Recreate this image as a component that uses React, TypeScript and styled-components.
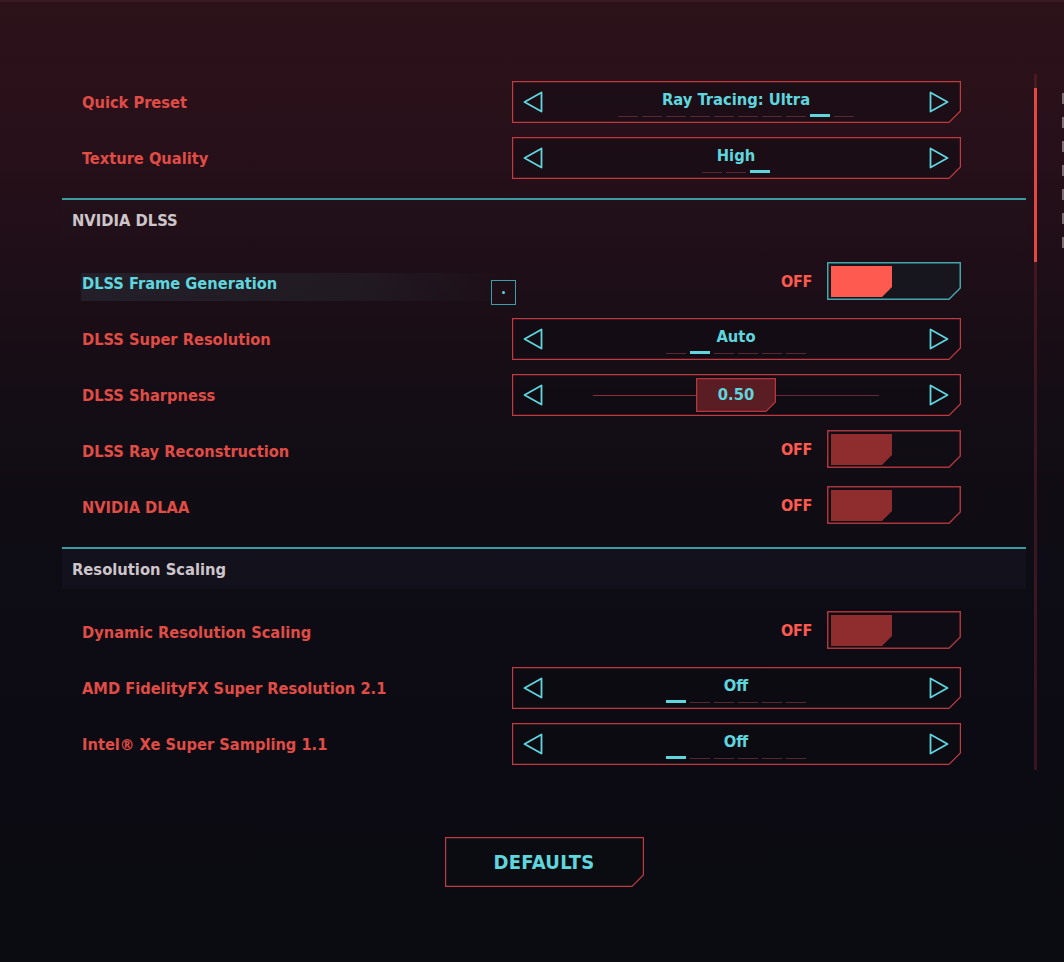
import React from "react";
import styled, { createGlobalStyle } from "styled-components";

const RED = "#e04c46";
const HOT = "#ff5a4f";
const TEAL = "#5fd6de";
const LINE_TEAL = "#3a9ba0";
const FRAME_RED = "#c03a42";

const GlobalStyle = createGlobalStyle`
  body {
    margin: 0;
    background: #0b0b12;
    font-family: "Liberation Sans Narrow", "DejaVu Sans Condensed", sans-serif;
  }
`;

// cut-corner outline used by selectors, toggles and the button
const FrameSvg = styled.svg`
  position: absolute;
  left: 0;
  top: 0;
  pointer-events: none;
  overflow: visible;
`;

type FrameProps = { w: number; h: number; cut: number; stroke: string; fill: string; sw?: number };

const Frame: React.FC<FrameProps> = ({ w, h, cut, stroke, fill, sw = 1.2 }) => {
  const o = sw / 2;
  const pts = `${o},${o} ${w - o},${o} ${w - o},${h - cut} ${w - cut},${h - o} ${o},${h - o}`;
  return (
    <FrameSvg width={w} height={h} viewBox={`0 0 ${w} ${h}`}>
      <polygon points={pts} fill={fill} stroke={stroke} strokeWidth={sw} />
    </FrameSvg>
  );
};

const Arrow: React.FC<{ dir: "left" | "right" }> = ({ dir }) => (
  <ArrowSvg width="20" height="22" viewBox="0 0 20 22">
    {dir === "left" ? (
      <polygon points="18.5,1.5 1.5,11 18.5,20.5" fill="none" stroke={TEAL} strokeWidth="1.8" strokeLinejoin="round" />
    ) : (
      <polygon points="1.5,1.5 18.5,11 1.5,20.5" fill="none" stroke={TEAL} strokeWidth="1.8" strokeLinejoin="round" />
    )}
  </ArrowSvg>
);

const ArrowSvg = styled.svg`
  position: relative;
  flex-shrink: 0;
`;

const Page = styled.div`
  width: 1064px;
  height: 962px;
  overflow: hidden;
  box-sizing: border-box;
  border-top: 2px solid #3a1921;
  padding-top: 72px;
  background: linear-gradient(
    180deg,
    #2c1219 0%,
    #28101a 14%,
    #1e0e17 28%,
    #140d15 42%,
    #0e0c14 58%,
    #0c0b13 75%,
    #0b0b12 100%
  );
  display: flex;
  flex-direction: column;
`;

const Body = styled.div`
  display: flex;
  align-items: flex-start;
`;

const List = styled.div`
  margin-left: 62px;
  width: 964px;
  display: flex;
  flex-direction: column;
`;

const ScrollTrack = styled.div`
  margin-left: 8px;
  width: 3px;
  height: 696px;
  background: rgba(110, 36, 46, 0.45);
  display: flex;
  flex-direction: column;
`;

const ScrollThumb = styled.div`
  margin-top: 14px;
  height: 174px;
  background: #e2483f;
`;

const Peek = styled.div`
  margin-left: 25px;
  margin-top: 19px;
  display: flex;
  flex-direction: column;
  gap: 13px;
`;

const PeekMark = styled.span`
  width: 2px;
  height: 11px;
  background: rgba(210, 200, 200, 0.5);
`;

const Row = styled.div<{ $focused?: boolean }>`
  position: relative;
  height: 56px;
  display: flex;
  align-items: center;
  justify-content: space-between;
  padding: 0 65px 0 20px;
  background: ${(p) =>
    p.$focused
      ? "linear-gradient(90deg, transparent 0px, transparent 18px, rgba(60, 95, 105, 0.22) 20px, rgba(55, 85, 95, 0.16) 300px, rgba(55, 85, 95, 0) 450px) no-repeat 0 18px / 100% 28px"
      : "none"};
`;

const Label = styled.span<{ $focused?: boolean }>`
  font-size: 16.3px;
  font-weight: bold;
  color: ${(p) => (p.$focused ? TEAL : RED)};
`;

const Cursor = styled.div`
  position: absolute;
  left: 429px;
  top: 25px;
  width: 25px;
  height: 25px;
  box-sizing: border-box;
  border: 1.5px solid #3c9ea6;
  display: flex;
  align-items: center;
  justify-content: center;
  &::after {
    content: "";
    width: 3px;
    height: 3px;
    border-radius: 50%;
    background: ${TEAL};
  }
`;

const Divider = styled.div`
  margin-top: 12px;
  height: 2px;
  background: ${LINE_TEAL};
`;

const SectionHeader = styled.div<{ $band?: number }>`
  height: 40px;
  display: flex;
  align-items: center;
  padding-left: 10px;
  margin-bottom: 15px;
  background: ${(p) => `rgba(30, 30, 50, ${p.$band ?? 0.25})`};
  color: #cdc5ca;
  font-size: 16.4px;
  font-weight: bold;
`;

const SelectorBox = styled.div`
  position: relative;
  width: 449px;
  height: 42px;
  box-sizing: border-box;
  padding: 0 12px 0 11px;
  display: flex;
  align-items: center;
`;

const ValueStack = styled.div`
  position: relative;
  flex: 1;
  display: flex;
  flex-direction: column;
  align-items: center;
  padding-top: 3px;
`;

const ValueText = styled.span`
  font-size: 16.4px;
  font-weight: bold;
  line-height: 20px;
  color: ${TEAL};
`;

const Dashes = styled.div`
  margin-top: 4px;
  height: 3px;
  display: flex;
  align-items: flex-end;
  gap: 4px;
`;

const Dash = styled.span<{ $active: boolean }>`
  width: 20px;
  height: ${(p) => (p.$active ? 3 : 1.5)}px;
  background: ${(p) => (p.$active ? TEAL : "#5a2630")};
`;

const Track = styled.div`
  position: relative;
  flex: 1;
  margin: 0 50px;
  display: flex;
  align-items: center;
`;

const TrackLine = styled.div<{ $lit?: boolean }>`
  flex: 1;
  height: 1px;
  background: ${(p) => (p.$lit ? "#8f3037" : "#6a2a31")};
`;

const Handle = styled.div`
  position: relative;
  width: 80px;
  height: 34px;
  display: flex;
  align-items: center;
  justify-content: center;
`;

const ToggleWrap = styled.div`
  display: flex;
  align-items: center;
  gap: 15px;
  margin-top: -4px;
`;

const OffText = styled.span`
  font-size: 16px;
  font-weight: bold;
  letter-spacing: -0.3px;
  color: ${HOT};
`;

const ToggleBox = styled.div`
  position: relative;
  width: 134px;
  height: 38px;
  box-sizing: border-box;
  padding: 4px 0 3px 4px;
  display: flex;
`;

const Knob = styled.div<{ $hot?: boolean }>`
  position: relative;
  width: 61px;
  height: 100%;
  background: ${(p) => (p.$hot ? "#ff5a50" : "#8e2c2e")};
  clip-path: polygon(0 0, 100% 0, 100% calc(100% - 10px), calc(100% - 10px) 100%, 0 100%);
`;

const Footer = styled.div`
  margin: 65px 0 0 62px;
  width: 964px;
  display: flex;
  justify-content: center;
`;

const DefaultsButton = styled.button`
  position: relative;
  width: 199px;
  height: 50px;
  border: none;
  padding: 0;
  background: none;
  cursor: pointer;
  font-family: inherit;
  font-size: 20px;
  font-weight: bold;
  letter-spacing: 0.3px;
  color: ${TEAL};
  display: flex;
  align-items: center;
  justify-content: center;
`;

const Txt = styled.span`
  position: relative;
`;

type SelectorProps = { value: string; count: number; active: number };

const Selector: React.FC<SelectorProps> = ({ value, count, active }) => (
  <SelectorBox>
    <Frame w={449} h={42} cut={12} stroke={FRAME_RED} fill="rgba(14, 10, 18, 0.45)" />
    <Arrow dir="left" />
    <ValueStack>
      <ValueText>{value}</ValueText>
      <Dashes>
        {Array.from({ length: count }).map((_, i) => (
          <Dash key={i} $active={i === active} />
        ))}
      </Dashes>
    </ValueStack>
    <Arrow dir="right" />
  </SelectorBox>
);

const Slider: React.FC<{ value: string }> = ({ value }) => (
  <SelectorBox>
    <Frame w={449} h={42} cut={12} stroke={FRAME_RED} fill="rgba(14, 10, 18, 0.45)" />
    <Arrow dir="left" />
    <Track>
      <TrackLine $lit />
      <Handle>
        <Frame w={80} h={34} cut={10} stroke="#b8373e" fill="#5a1d23" />
        <Txt>
          <ValueText>{value}</ValueText>
        </Txt>
      </Handle>
      <TrackLine />
    </Track>
    <Arrow dir="right" />
  </SelectorBox>
);

const Toggle: React.FC<{ focused?: boolean }> = ({ focused }) => (
  <ToggleWrap>
    <OffText>OFF</OffText>
    <ToggleBox>
      <Frame
        w={134}
        h={38}
        cut={12}
        stroke={focused ? "#45a5ab" : "#a8363b"}
        fill={focused ? "rgba(22, 24, 32, 0.85)" : "rgba(16, 14, 22, 0.6)"}
        sw={1.5}
      />
      <Knob $hot={focused} />
    </ToggleBox>
  </ToggleWrap>
);

export default function App() {
  return (
    <>
      <GlobalStyle />
      <Page>
        <Body>
          <List>
            <Row>
              <Label>Quick Preset</Label>
              <Selector value="Ray Tracing: Ultra" count={10} active={8} />
            </Row>
            <Row>
              <Label>Texture Quality</Label>
              <Selector value="High" count={3} active={2} />
            </Row>
            <Divider />
            <SectionHeader $band={0.06}>NVIDIA DLSS</SectionHeader>
            <Row $focused>
              <Label $focused>DLSS Frame Generation</Label>
              <Cursor />
              <Toggle focused />
            </Row>
            <Row>
              <Label>DLSS Super Resolution</Label>
              <Selector value="Auto" count={6} active={1} />
            </Row>
            <Row>
              <Label>DLSS Sharpness</Label>
              <Slider value="0.50" />
            </Row>
            <Row>
              <Label>DLSS Ray Reconstruction</Label>
              <Toggle />
            </Row>
            <Row>
              <Label>NVIDIA DLAA</Label>
              <Toggle />
            </Row>
            <Divider />
            <SectionHeader>Resolution Scaling</SectionHeader>
            <Row>
              <Label>Dynamic Resolution Scaling</Label>
              <Toggle />
            </Row>
            <Row>
              <Label>AMD FidelityFX Super Resolution 2.1</Label>
              <Selector value="Off" count={6} active={0} />
            </Row>
            <Row>
              <Label>Intel® Xe Super Sampling 1.1</Label>
              <Selector value="Off" count={6} active={0} />
            </Row>
          </List>
          <ScrollTrack>
            <ScrollThumb />
          </ScrollTrack>
          <Peek>
            {Array.from({ length: 7 }).map((_, i) => (
              <PeekMark key={i} />
            ))}
          </Peek>
        </Body>
        <Footer>
          <DefaultsButton>
            <Frame w={199} h={50} cut={12} stroke={FRAME_RED} fill="rgba(12, 11, 19, 0.6)" />
            <Txt>DEFAULTS</Txt>
          </DefaultsButton>
        </Footer>
      </Page>
    </>
  );
}
